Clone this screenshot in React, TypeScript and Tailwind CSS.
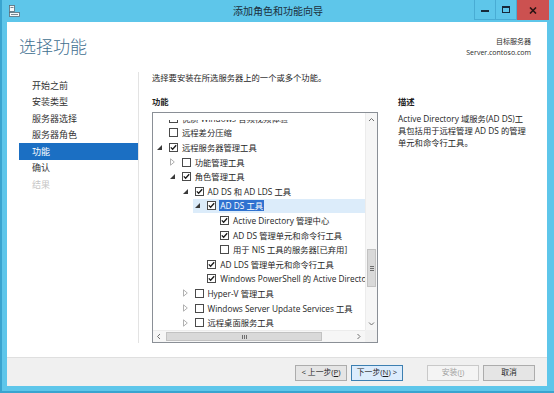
import React from "react";

type Row = {
  level: number;
  arrow: "open" | "closed" | "none";
  checked: boolean;
  text: string;
  selected?: boolean;
};

const rows: Row[] = [
  { level: 0, arrow: "none", checked: false, text: "优质 Windows 音频视频体验" },
  { level: 0, arrow: "none", checked: false, text: "远程差分压缩" },
  { level: 0, arrow: "open", checked: true, text: "远程服务器管理工具" },
  { level: 1, arrow: "closed", checked: false, text: "功能管理工具" },
  { level: 1, arrow: "open", checked: true, text: "角色管理工具" },
  { level: 2, arrow: "open", checked: true, text: "AD DS 和 AD LDS 工具" },
  { level: 3, arrow: "open", checked: true, text: "AD DS 工具", selected: true },
  { level: 4, arrow: "none", checked: true, text: "Active Directory 管理中心" },
  { level: 4, arrow: "none", checked: true, text: "AD DS 管理单元和命令行工具" },
  { level: 4, arrow: "none", checked: false, text: "用于 NIS 工具的服务器[已弃用]" },
  { level: 3, arrow: "none", checked: true, text: "AD LDS 管理单元和命令行工具" },
  { level: 3, arrow: "none", checked: true, text: "Windows PowerShell 的 Active Directory 模块" },
  { level: 2, arrow: "closed", checked: false, text: "Hyper-V 管理工具" },
  { level: 2, arrow: "closed", checked: false, text: "Windows Server Update Services 工具" },
  { level: 2, arrow: "closed", checked: false, text: "远程桌面服务工具" },
];

const levelPad = ["pl-[2px]", "pl-[14.75px]", "pl-[27.5px]", "pl-[40.25px]", "pl-[53px]"];

function Arrow({ kind }: { kind: Row["arrow"] }) {
  if (kind === "open")
    return (
      <svg width="5" height="5" viewBox="0 0 5 5" className="ml-[2px]">
        <path d="M5 0 L5 5 L0 5 Z" fill="#3a3a3a" />
      </svg>
    );
  if (kind === "closed")
    return (
      <svg width="5" height="8" viewBox="0 0 5 8" className="ml-[2px]">
        <path d="M0.5 0.8 L4.3 4 L0.5 7.2 Z" fill="none" stroke="#a8a8a8" strokeWidth="0.9" />
      </svg>
    );
  return null;
}

function CheckBox({ checked }: { checked: boolean }) {
  return (
    <div className="w-[9px] h-[9px] border border-[#4a4a4a] bg-white shrink-0 relative">
      {checked && (
        <svg width="9" height="9" viewBox="0 0 9 9" className="absolute left-[-1px] top-[-1px]">
          <path d="M1.8 4.4 L3.6 6.3 L7.2 2.2" fill="none" stroke="#1a1a1a" strokeWidth="1.3" />
        </svg>
      )}
    </div>
  );
}

function TreeRow({ row }: { row: Row }) {
  return (
    <div className={`h-[14.6px] flex ${levelPad[row.level]}`}>
      <div
        className={`flex-1 flex items-center whitespace-nowrap ${
          row.selected ? "bg-[#dcecfa]" : ""
        }`}
      >
        <div className="w-[14px] shrink-0 flex items-center">
          <Arrow kind={row.arrow} />
        </div>
        <CheckBox checked={row.checked} />
        <span
          className={`leading-[11px] ${
            row.selected ? "bg-[#2f72d0] text-white px-[1px] ml-[3px]" : "ml-[4px] text-[#1e1e1e]"
          }`}
        >
          {row.text}
        </span>
      </div>
    </div>
  );
}

function Chevron({ dir }: { dir: "up" | "down" | "left" | "right" }) {
  const d = {
    up: "M1 4 L3.5 1.5 L6 4",
    down: "M1 1.5 L3.5 4 L6 1.5",
    left: "M4 1 L1.5 3.5 L4 6",
    right: "M1.5 1 L4 3.5 L1.5 6",
  }[dir];
  const vert = dir === "up" || dir === "down";
  return (
    <svg width={vert ? 7 : 5.5} height={vert ? 5.5 : 7} viewBox={vert ? "0 0 7 5.5" : "0 0 5.5 7"}>
      <path d={d} fill="none" stroke="#707070" strokeWidth="1" />
    </svg>
  );
}

function Button({
  children,
  variant,
}: {
  children: React.ReactNode;
  variant: "normal" | "default" | "disabled";
}) {
  const cls =
    variant === "default"
      ? "bg-[#dcecfc] border-[#3c7fb1] text-[#1e1e1e]"
      : variant === "disabled"
      ? "bg-[#f4f4f4] border-[#c9c9c9] text-[#a0a0a0]"
      : "bg-[#e5e5e5] border-[#acacac] text-[#1e1e1e]";
  return (
    <div
      className={`w-[52px] h-[16px] border flex items-center justify-center text-[7.8px] leading-none ${cls}`}
    >
      {children}
    </div>
  );
}

export default function App() {
  return (
    <div className="w-[554px] h-[393px] bg-[#5ec6ea] border-l-[2px] border-[#3aa4cf] flex flex-col [font-family:'Open_Sans','Noto_Sans_CJK_SC',sans-serif] overflow-hidden">
      {/* Title bar */}
      <div className="h-[22px] flex items-start relative shrink-0">
        <div className="absolute left-[7px] top-[5px]">
          <svg width="11" height="12" viewBox="0 0 11 12">
            <rect x="0.5" y="0.5" width="5" height="6" fill="#f4f8fa" stroke="#5a6a75" strokeWidth="0.8" />
            <rect x="1.5" y="2" width="3" height="0.8" fill="#5a6a75" />
            <rect x="0.5" y="7.5" width="10" height="4" fill="#f4f8fa" stroke="#5a6a75" strokeWidth="0.8" />
            <rect x="2" y="9" width="7" height="1" fill="#7a8a95" />
          </svg>
        </div>
        <div className="flex-1 text-center text-[10px] leading-[22px] text-[#1b2f3c]">
          添加角色和功能向导
        </div>
        <div className="absolute right-[5px] top-0 flex">
          <div className="w-[22px] h-[20px] border border-[#49acd4] border-t-0 flex items-center justify-center">
            <div className="w-[8px] h-[2px] bg-[#17293a] mt-[3px]" />
          </div>
          <div className="w-[21px] h-[20px] border border-[#49acd4] border-t-0 border-l-0 flex items-center justify-center">
            <div className="w-[8px] h-[7px] border border-[#17293a] border-t-[2px]" />
          </div>
          <div className="w-[32px] h-[20px] bg-[#cc5150] flex items-center justify-center">
            <svg width="8" height="7" viewBox="0 0 8 7">
              <path d="M1 0.5 L7 6.5 M7 0.5 L1 6.5" stroke="#2a1414" strokeWidth="1.6" />
            </svg>
          </div>
        </div>
      </div>

      {/* Client */}
      <div className="ml-[5px] mr-[7px] h-[364px] bg-white flex flex-col shrink-0">
        {/* Header */}
        <div className="h-[50px] flex justify-between shrink-0">
          <div className="pl-[12px] pt-[15px] text-[17px] leading-[20px] text-[#3f6f90] font-light">
            选择功能
          </div>
          <div className="pr-[16px] pt-[14px] text-right text-[7px] leading-[11px] text-[#2a2a2a]">
            <div>目标服务器</div>
            <div>Server.contoso.com</div>
          </div>
        </div>

        {/* Body */}
        <div className="h-[285px] flex shrink-0 text-[8.3px]">
          <div className="w-[132px] h-[271px] border-r border-[#e3e3e3] pl-[12px] pt-[5px] text-[9px] text-[#333]">
            {[
              ["开始之前", "n"],
              ["安装类型", "n"],
              ["服务器选择", "n"],
              ["服务器角色", "n"],
              ["功能", "s"],
              ["确认", "n"],
              ["结果", "d"],
            ].map(([t, s]) => (
              <div
                key={t}
                className={`h-[16.5px] flex items-center pl-[13px] ${
                  s === "s" ? "bg-[#1b6fc3] text-white" : s === "d" ? "text-[#c6c6c6]" : ""
                }`}
              >
                {t}
              </div>
            ))}
          </div>

          <div className="flex-1 pl-[13px] text-[#1e1e1e]">
            <div className="leading-[12px]">选择要安装在所选服务器上的一个或多个功能。</div>
            <div className="flex mt-[12px]">
              <div className="w-[226px] shrink-0">
                <div className="leading-[12px] font-semibold">功能</div>
                <div className="mt-[4px] h-[231px] border border-[#8a8f96] flex flex-col">
                  <div className="flex-1 flex min-h-0">
                    <div className="flex-1 pt-[7px] flex flex-col min-w-0">
                      <div className="flex-1 overflow-hidden">
                        <div className="mt-[-9px]">
                          {rows.map((r, i) => (
                            <TreeRow key={i} row={r} />
                          ))}
                        </div>
                      </div>
                    </div>
                    <div className="w-[12px] bg-[#f6f6f6] border-l border-[#ececec] flex flex-col items-center">
                      <div className="h-[13px] flex items-center justify-center">
                        <Chevron dir="up" />
                      </div>
                      <div className="flex-1 w-full relative">
                        <div className="absolute left-[1px] right-[1px] top-[123px] h-[38px] bg-[#d9d9d9] border border-[#c2c2c2] flex flex-col items-center justify-center gap-[1px]">
                          <div className="w-[4px] h-[1px] bg-[#6e6e6e]" />
                          <div className="w-[4px] h-[1px] bg-[#6e6e6e]" />
                          <div className="w-[4px] h-[1px] bg-[#6e6e6e]" />
                        </div>
                      </div>
                      <div className="h-[13px] flex items-center justify-center">
                        <Chevron dir="down" />
                      </div>
                    </div>
                  </div>
                  <div className="h-[12px] flex shrink-0">
                    <div className="flex-1 bg-[#f6f6f6] border-t border-[#ececec] flex items-center">
                      <div className="w-[12px] flex items-center justify-center">
                        <Chevron dir="left" />
                      </div>
                      <div className="flex-1 h-full relative">
                        <div className="absolute left-[1px] w-[156px] top-[1px] bottom-[1px] bg-[#d9d9d9] border border-[#c2c2c2] flex items-center justify-center gap-[1px]">
                          <div className="w-[1px] h-[4px] bg-[#6e6e6e]" />
                          <div className="w-[1px] h-[4px] bg-[#6e6e6e]" />
                          <div className="w-[1px] h-[4px] bg-[#6e6e6e]" />
                        </div>
                      </div>
                      <div className="w-[12px] flex items-center justify-center">
                        <Chevron dir="right" />
                      </div>
                    </div>
                    <div className="w-[12px] bg-[#f0f0f0]" />
                  </div>
                </div>
              </div>

              <div className="ml-[20px] text-[#1e1e1e]">
                <div className="leading-[12px] font-semibold">描述</div>
                <div className="mt-[5px] leading-[12px] whitespace-nowrap">
                  <div>Active Directory 域服务(AD DS)工</div>
                  <div>具包括用于远程管理 AD DS 的管理</div>
                  <div>单元和命令行工具。</div>
                </div>
              </div>
            </div>
          </div>
        </div>

        {/* Footer */}
        <div className="h-[1px] bg-[#dfdfdf] shrink-0" />
        <div className="flex-1 bg-[#f0f0f0] flex items-start pt-[7px] pr-[12px] justify-end">
          <Button variant="normal">
            &lt; 上一步(<span className="underline">P</span>)
          </Button>
          <div className="ml-[4px]">
            <Button variant="default">
              下一步(<span className="underline">N</span>) &gt;
            </Button>
          </div>
          <div className="ml-[24px]">
            <Button variant="disabled">
              安装(<span className="underline">I</span>)
            </Button>
          </div>
          <div className="ml-[4px]">
            <Button variant="normal">取消</Button>
          </div>
        </div>
      </div>

      <div className="flex-1 border-b-[2px] border-[#3aa4cf]" />
    </div>
  );
}
